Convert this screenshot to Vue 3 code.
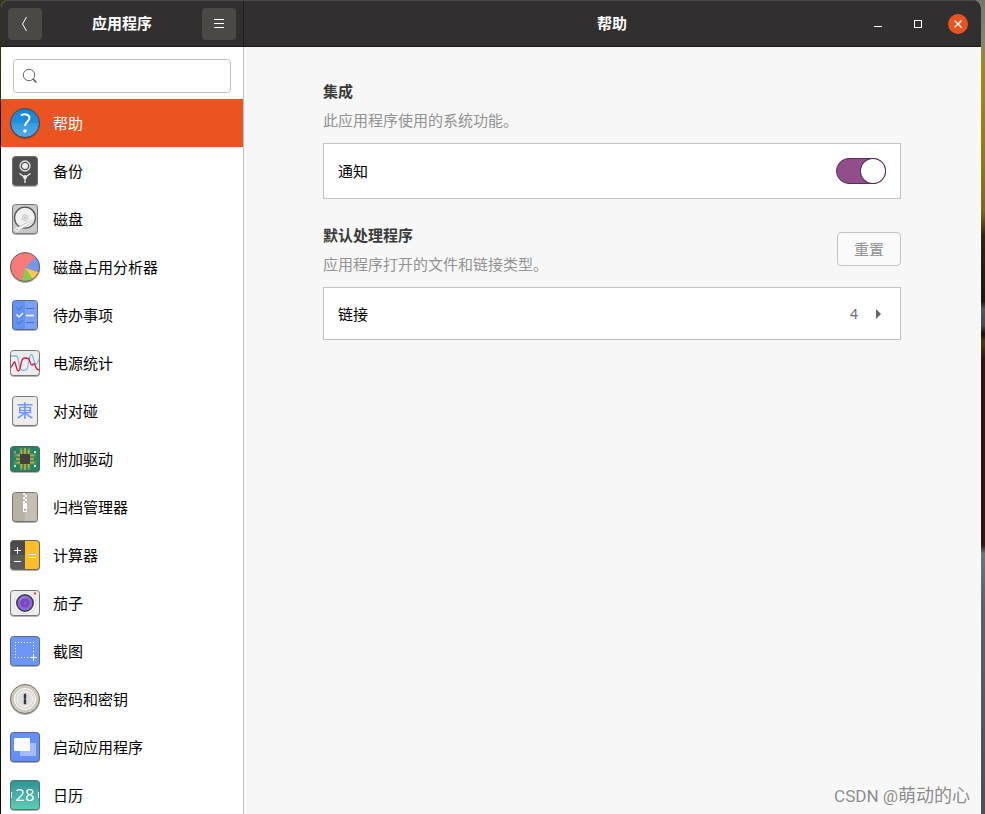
<template>
  <div class="desktop">
    <div class="window">
      <header class="titlebar">
        <div class="titlebar-side">
          <button class="bar-btn" type="button" aria-label="返回">
            <svg width="16" height="16" viewBox="0 0 16 16">
              <path d="M9.5 1 5.5 8l4 7" fill="none" stroke="#fff" />
            </svg>
          </button>
          <h1>应用程序</h1>
          <button class="bar-btn" type="button" aria-label="菜单">
            <svg width="16" height="16" viewBox="0 0 16 16">
              <path d="M3 3.5h10M3 7.5h10M3 11.5h10" stroke="#fff" />
            </svg>
          </button>
        </div>

        <div class="titlebar-main">
          <h1>{{ current.label }}</h1>
          <div class="window-controls">
            <button type="button" aria-label="最小化">
              <svg width="20" height="20" viewBox="0 0 20 20">
                <path d="M6 12.5h8" stroke="#fff" />
              </svg>
            </button>
            <button type="button" aria-label="最大化">
              <svg width="20" height="20" viewBox="0 0 20 20">
                <rect x="6.5" y="6.5" width="7" height="7" fill="none" stroke="#fff" />
              </svg>
            </button>
            <button class="close" type="button" aria-label="关闭">
              <svg width="20" height="20" viewBox="0 0 20 20">
                <path d="m6.5 6.5 7 7m0-7-7 7" stroke="#fff" stroke-width="1.3" />
              </svg>
            </button>
          </div>
        </div>
      </header>

      <div class="body">
        <aside class="sidebar">
          <div class="search">
            <svg width="16" height="16" viewBox="0 0 16 16">
              <circle cx="7" cy="7" r="5.7" fill="none" stroke="#666" />
              <path d="m11 11 3.5 3.5" stroke="#555" stroke-width="1.5" />
            </svg>
            <input v-model="query" type="text" aria-label="搜索应用程序" />
          </div>

          <ul class="app-list">
            <li v-for="app in filteredApps" :key="app.id">
              <button
                type="button"
                class="app-row"
                :class="{ selected: app.id === selected }"
                @click="selected = app.id"
              >
                <svg class="app-icon" width="32" height="32" viewBox="0 0 32 32" aria-hidden="true">
                  <g v-if="app.id === 'help'">
                    <linearGradient id="help-fill" x2="0" y2="1">
                      <stop offset="0" stop-color="#1a7fd4" />
                      <stop offset=".5" stop-color="#2290de" />
                      <stop offset=".52" stop-color="#359be2" />
                      <stop offset="1" stop-color="#50ade8" />
                    </linearGradient>
                    <circle cx="16" cy="16" r="14.5" fill="url(#help-fill)" stroke="#3c4650" />
                    <path
                      d="M12 8.5c2-2 8.5-1.7 8.5 2.5 0 3.5-4.5 3.5-4.5 8"
                      fill="none"
                      stroke="#fff"
                      stroke-width="2"
                    />
                    <circle cx="16" cy="24" r="1.8" fill="#fff" />
                  </g>

                  <g v-else-if="app.id === 'backup'">
                    <rect x="3.5" y="1.5" width="25" height="29" rx="3" fill="#4f4f4f" stroke="#6c6c6c" />
                    <circle cx="16" cy="11" r="5" fill="none" stroke="#e8e8e8" stroke-width="1.3" />
                    <circle cx="16" cy="11" r="3" fill="#eee" />
                    <path d="m10.5 18.5 5.5 4 5.5-4M16 22v6" fill="none" stroke="#eee" stroke-width="1.3" />
                    <circle cx="16" cy="22" r="2" fill="#eee" />
                  </g>

                  <g v-else-if="app.id === 'disks'">
                    <rect x="3.5" y="1.5" width="25" height="29" rx="3" fill="#c9c9c9" stroke="#777" />
                    <circle cx="16" cy="14.7" r="10.5" fill="#f1f1f1" stroke="#555" stroke-width="1.3" />
                    <circle cx="16" cy="14.7" r="3" fill="#e4e4e4" stroke="#cdcdcd" />
                    <circle cx="16" cy="14.7" r="1" fill="#bbb" />
                    <path d="M6 25.500 23 17.500l1.500 1L9 28z" fill="#fafafa" stroke="#aaa" stroke-width=".6" />
                    <circle cx="8" cy="26.5" r="2.2" fill="#fff" stroke="#ccc" stroke-width=".5" />
                    <circle cx="8" cy="26.5" r=".8" fill="#999" />
                  </g>

                  <g v-else-if="app.id === 'usage'">
                    <circle cx="16" cy="16" r="14.5" fill="#f77b7b" />
                    <path d="M16 17 26.500 6A14.500 14.500 0 0 1 30 21.500z" fill="#7398ee" />
                    <path d="m16 17 14 4.500a15 15 0 0 1-6 7z" fill="#fac852" />
                    <path d="m16 17 8 11.500a15 15 0 0 1-11.500 1.500z" fill="#8bc84d" />
                    <circle cx="16" cy="16" r="14.5" fill="none" stroke="#735d60" />
                  </g>

                  <g v-else-if="app.id === 'todo'">
                    <rect x="3.5" y="1.5" width="25" height="29" rx="3" fill="#6692f4" stroke="#57698f" />
                    <path d="M16 2v28h10a2 2 0 0 0 2-2V4a2 2 0 0 0-2-2z" fill="#7aa0f7" />
                    <path
                      d="m7.5 8.500 2.500 2.500 4-4M17 9.500h8M7.500 22.500 10 25l4-4M17 23.500h8"
                      fill="none"
                      stroke="#4c6fb8"
                    />
                    <path d="m7.5 15.500 2.500 2.500 4-4M17 16.500h8" fill="none" stroke="#fff" stroke-width="1.3" />
                  </g>

                  <g v-else-if="app.id === 'power'">
                    <rect x="1.5" y="3.5" width="29" height="25" rx="3" fill="#ededed" stroke="#777" />
                    <path
                      d="M2 9h5c2 0 2 2 2.500 5s1 8 3 9c4 1 6 0 6.500-4s1.500-11.500 3.500-11.500S24.500 17 27 17c1.500 0 2-3 3-5"
                      fill="none"
                      stroke="#84bce4"
                      stroke-width="1.3"
                    />
                    <path
                      d="M2 20c1.500 0 2-5 3.500-5S7 24 9.500 24s1.500-13 6-13c5 0 4.500 1 5.500 4s1 3 2 3 1.500-2 2.500-1 1 6 4.500 6"
                      fill="none"
                      stroke="#d2153e"
                      stroke-width="1.3"
                    />
                  </g>

                  <g v-else-if="app.id === 'mahjongg'">
                    <rect x="3.5" y="1.5" width="25" height="29" rx="3" fill="#ededed" stroke="#777" />
                    <text x="16" y="22" class="tile-text">東</text>
                  </g>

                  <g v-else-if="app.id === 'drivers'">
                    <rect x="1.5" y="3.5" width="29" height="25" rx="3" fill="#278260" stroke="#4b6459" />
                    <path
                      d="M12 5v22M16 5v22M20 5v22M7 12h18M7 16h18M7 20h18"
                      fill="none"
                      stroke="#5b9b7c"
                      stroke-width="2.5"
                    />
                    <path
                      d="M12.500 7v18M16 5v22M19.500 7v18M8 12.500h17M7 16h18M8 19.500h17"
                      fill="none"
                      stroke="#dba915"
                      stroke-width="1.5"
                    />
                    <rect x="11" y="11" width="10" height="10" fill="#414141" />
                    <path d="M5 8h2v2H5z" fill="#e36fc0" />
                    <path d="M25 8h2v2h-2zM5 22h2v2H5zM25 22h2v2h-2z" fill="#c7edd8" />
                    <path d="M6 10v4M26 10v4M6 18v4M26 18v4" stroke="#5fa98a" />
                  </g>

                  <g v-else-if="app.id === 'archive'">
                    <rect x="3.5" y="1.5" width="25" height="29" rx="3" fill="#b7b2a2" stroke="#74726b" />
                    <path d="M16 2v28h10a2 2 0 0 0 2-2V4a2 2 0 0 0-2-2z" fill="#c3bfb2" />
                    <path d="M14 2h2v2h-2zm2 2h2v2h-2zm-2 2h2v2h-2zm2 2h2v2h-2zm-2 2h2v2h-2z" fill="#fff" />
                    <path d="M14 12h4v9h-4z" fill="#fff" />
                    <path d="M15 18h2v1.500h-2z" fill="#99958b" />
                  </g>

                  <g v-else-if="app.id === 'calculator'">
                    <rect x="1.5" y="1.5" width="29" height="29" rx="3" fill="#5b5b5b" />
                    <path d="M2 2h14v14H2z" fill="#4b4b4b" />
                    <path d="M16 2h12a2 2 0 0 1 2 2v24a2 2 0 0 1-2 2H16z" fill="#fdbd2b" />
                    <path d="M5 11.500h7M8.500 8v7M5 22.500h7M20 15.500h7M20 18.500h7" stroke="#fff" />
                    <rect x="1.5" y="1.5" width="29" height="29" rx="3" fill="none" stroke="#696660" />
                  </g>

                  <g v-else-if="app.id === 'cheese'">
                    <rect x="1.5" y="3.5" width="29" height="25" rx="3" fill="#efefef" stroke="#777" />
                    <circle cx="16" cy="16" r="11" fill="#f7f7f7" stroke="#ddd" />
                    <circle cx="16" cy="16" r="8.2" fill="#8a68dc" stroke="#3f3f45" stroke-width="1.6" />
                    <circle cx="16" cy="16" r="4.5" fill="#7446c2" />
                    <circle cx="16" cy="16" r="2" fill="#9a50ca" />
                    <path d="M11 13a6 6 0 0 1 5-3" fill="none" stroke="#aa90e4" />
                    <circle cx="26" cy="6.5" r="1.2" fill="#e8453e" />
                  </g>

                  <g v-else-if="app.id === 'screenshot'">
                    <rect x="1.5" y="1.5" width="29" height="29" rx="3" fill="#6c96f7" stroke="#566b99" />
                    <path
                      d="M6 7.500h19M6.500 10v13M24.500 10v9M9 22.500h12"
                      fill="none"
                      stroke="#fff"
                      stroke-dasharray="1 2"
                    />
                    <path d="M24.500 19v7M21 22.500h7" stroke="#fff" />
                  </g>

                  <g v-else-if="app.id === 'keys'">
                    <circle cx="16" cy="16" r="14.5" fill="#cecabd" stroke="#73716b" />
                    <circle cx="16" cy="16" r="10.5" fill="#ddd9ce" stroke="#fff" />
                    <circle cx="16" cy="16" r="7.5" fill="#dedede" stroke="#f9f9f9" />
                    <path d="M15 11h2v4l-.5 1 .5 1v4h-2v-4l.5-1-.5-1z" fill="#333" stroke="#444" stroke-width=".5" />
                  </g>

                  <g v-else-if="app.id === 'startup'">
                    <rect x="1.5" y="1.5" width="29" height="29" rx="3" fill="#668ff5" stroke="#526796" />
                    <rect x="11" y="12" width="16" height="13" rx="1" fill="#a3bdfa" />
                    <rect x="5" y="7" width="16" height="13" rx="1" fill="#fff" />
                  </g>

                  <g v-else>
                    <linearGradient id="calendar-fill" x2="0" y2="1">
                      <stop offset="0" stop-color="#2f9294" />
                      <stop offset="1" stop-color="#5fcdb6" />
                    </linearGradient>
                    <rect x="1.5" y="1.5" width="29" height="29" rx="3" fill="url(#calendar-fill)" stroke="#467b75" />
                    <path d="M2.500 13v6M29.500 13v6" stroke="#e5f8f3" />
                    <text x="16" y="22" class="date-text">28</text>
                  </g>
                </svg>
                <span>{{ app.label }}</span>
              </button>
            </li>
          </ul>
        </aside>

        <main class="content">
          <section>
            <h2>集成</h2>
            <p>此应用程序使用的系统功能。</p>
            <div class="card">
              <label for="notifications">通知</label>
              <input id="notifications" v-model="notifications" class="switch" type="checkbox" />
            </div>
          </section>

          <section>
            <div class="section-head">
              <div>
                <h2>默认处理程序</h2>
                <p>应用程序打开的文件和链接类型。</p>
              </div>
              <button class="reset-btn" type="button" disabled>重置</button>
            </div>
            <button class="card links" type="button">
              <span>链接</span>
              <span class="count">4</span>
              <svg width="5" height="10" viewBox="0 0 5 10">
                <path d="M0 0l5 5-5 5z" fill="#666" />
              </svg>
            </button>
          </section>
        </main>
      </div>
    </div>

    <div class="watermark">CSDN @<span>萌动的心</span></div>
  </div>
</template>

<script setup>
import { computed, ref } from "vue";

const apps = [
  { id: "help", label: "帮助" },
  { id: "backup", label: "备份" },
  { id: "disks", label: "磁盘" },
  { id: "usage", label: "磁盘占用分析器" },
  { id: "todo", label: "待办事项" },
  { id: "power", label: "电源统计" },
  { id: "mahjongg", label: "对对碰" },
  { id: "drivers", label: "附加驱动" },
  { id: "archive", label: "归档管理器" },
  { id: "calculator", label: "计算器" },
  { id: "cheese", label: "茄子" },
  { id: "screenshot", label: "截图" },
  { id: "keys", label: "密码和密钥" },
  { id: "startup", label: "启动应用程序" },
  { id: "calendar", label: "日历" }
];

const query = ref("");
const selected = ref("help");
const notifications = ref(true);

const current = computed(() => apps.find((app) => app.id === selected.value));
const filteredApps = computed(() =>
  apps.filter((app) => app.label.includes(query.value.trim()))
);
</script>

<style>
body {
  margin: 0;
}
</style>

<style scoped>
* {
  box-sizing: border-box;
}

.desktop {
  position: relative;
  height: 100vh;
  padding: 0 4px 0 1px;
  overflow: hidden;
  /* thin strips of wallpaper: dark on the left, the photo on the right */
  background:
    linear-gradient(#3a3512 0, #2d2a10 12%, #0d0a0a 16%, #0d0a0a 100%) left / 50% 100% no-repeat,
    linear-gradient(
      #77776a 0,
      #85856c 5%,
      #a08c12 8%,
      #8f7a10 20%,
      #7d6a10 26%,
      #2a250c 29%,
      #1b190c 37%,
      #55565a 38%,
      #4a4b4d 40%,
      #151309 41%,
      #4a3c0c 42%,
      #2b1a14 44%,
      #2b1a14 67%,
      #6e747c 68%,
      #5b6067 75%,
      #4c4f55 100%
    );
  font-family: "Noto Sans", "Noto Sans CJK SC", sans-serif;
  font-size: 15px;
  color: #000;
}

.window {
  display: flex;
  flex-direction: column;
  height: 100%;
  overflow: hidden;
  border-radius: 8px 8px 0 0;
  background: #f7f7f7;
}

button,
input {
  font: inherit;
}

button {
  padding: 0;
  border: none;
  background: none;
  color: inherit;
}

svg {
  display: block;
  flex: none;
}

h1,
h2,
p,
ul {
  margin: 0;
  padding: 0;
}

.titlebar {
  display: flex;
  flex: none;
  height: 47px;
  border-top: 1px solid #4a4848;
  border-bottom: 1px solid #1c1b1b;
  background: #322f30;
  color: #fff;
}

.titlebar h1 {
  flex: 1;
  padding-bottom: 2px;
  font-size: 15px;
  line-height: 22px;
  text-align: center;
}

.titlebar-side {
  display: flex;
  align-items: center;
  width: 243px;
  padding: 0 7px;
  border-right: 1px solid #1f1d1e;
}

.bar-btn {
  display: flex;
  align-items: center;
  justify-content: center;
  width: 34px;
  height: 32px;
  border-radius: 4px;
  background: #4a4946;
}

.titlebar-main {
  display: flex;
  flex: 1;
  align-items: center;
  padding-right: 13px;
}

.titlebar-main h1 {
  padding-left: 112px;
}

.window-controls {
  display: flex;
  gap: 20px;
}

.window-controls .close {
  border-radius: 50%;
  background: #e95420;
}

.body {
  display: flex;
  flex: 1;
  min-height: 0;
}

.sidebar {
  flex: none;
  width: 243px;
  overflow: hidden;
  border-right: 1px solid #c3c3c3;
  background: #fff;
}

.search {
  display: flex;
  align-items: center;
  height: 34px;
  margin: 12px 12px 6px;
  padding: 0 8px;
  border: 1px solid #bfbfbf;
  border-radius: 4px;
}

.search input {
  flex: 1;
  min-width: 0;
  padding: 0 8px;
  border: none;
  outline: none;
  background: none;
}

.app-list {
  list-style: none;
}

.app-row {
  display: flex;
  align-items: center;
  gap: 12px;
  width: 100%;
  height: 48px;
  padding: 0 8px;
  text-align: left;
}

.app-row span {
  padding-bottom: 2px;
}

.app-row.selected {
  background: #e95420;
  color: #fff;
}

.app-icon {
  filter: drop-shadow(0 1px 0 rgba(0, 0, 0, 0.3));
}

.tile-text {
  fill: #7299f8;
  font: 500 17px "Noto Sans CJK TC", sans-serif;
  text-anchor: middle;
}

.date-text {
  fill: #fff;
  font: 17px "Open Sans", sans-serif;
  text-anchor: middle;
}

.content {
  flex: 1;
  min-width: 0;
  padding: 30px 80px 0 79px;
}

.content section {
  margin-bottom: 22px;
}

.content h2,
.content p {
  font-size: 15px;
  line-height: 29px;
}

.content h2 {
  color: #3a3a3a;
}

.content p {
  color: #929292;
}

.section-head {
  display: flex;
  align-items: center;
  justify-content: space-between;
}

.reset-btn {
  width: 64px;
  height: 34px;
  margin-bottom: 2px;
  padding-bottom: 2px;
  border: 1px solid #c3c3c3;
  border-radius: 4px;
  background: #fafafa;
  color: #929292;
}

.card {
  display: flex;
  align-items: center;
  justify-content: space-between;
  width: 100%;
  height: 56px;
  margin-top: 8px;
  padding: 0 14px;
  border: 1px solid #c3c3c3;
  background: #fff;
}

.card label {
  padding-bottom: 2px;
}

.card.links {
  height: 53px;
  padding-right: 19px;
}

.count {
  margin: 0 18px 0 auto;
  color: #6c6c6c;
  font-size: 14px;
}

.switch {
  appearance: none;
  display: flex;
  width: 50px;
  height: 26px;
  margin: 0;
  border: 1px solid #c3c3c3;
  border-radius: 13px;
  background: #ddd;
}

.switch::before {
  content: "";
  width: 24px;
  height: 24px;
  border-radius: 50%;
  background: #fff;
  box-shadow: 0 0 0 1px #552e51;
}

.switch:checked {
  justify-content: flex-end;
  border-color: #552e51;
  background: #924d8b;
}

.watermark {
  position: absolute;
  right: 15px;
  bottom: 5px;
  color: #8c8c8c;
  font-family: Roboto, "Noto Sans CJK SC", sans-serif;
  font-size: 17px;
  line-height: 26px;
  text-shadow: -1px -1px 0 #fff;
  pointer-events: none;
}

.watermark span {
  font-size: 18px;
}
</style>
